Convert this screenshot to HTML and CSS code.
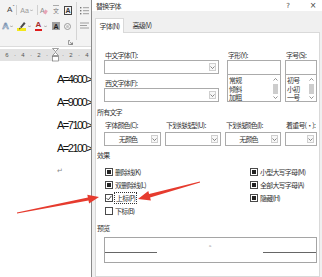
FILE: index.html
```html
<!DOCTYPE html>
<html lang="zh-CN">
<head>
<meta charset="utf-8">
<title>替换字体</title>
<link rel="stylesheet" href="styles.css">
</head>
<body>
<div class="app">
  <div class="word">
    <div class="ribbon">
      <div class="grp">
        <div class="rrow r1">
          <span class="ic shrink">A<span class="caret">ˇ</span></span>
          <span class="vsep s1"></span>
          <span class="ic aa">Aa</span>
          <span class="mini m1"><svg width="3" height="3" viewBox="0 0 3 3"><path d="M0 0.5 L1.5 2 L3 0.5" fill="none" stroke="#999" stroke-width="0.7"/></svg></span>
          <span class="vsep s2"></span>
          <span class="ic clr">A<span class="eraser"></span></span>
          <span class="ic py"><span class="pyt"></span><span class="pyc">文</span></span>
          <span class="ic boxa">A</span>
        </div>
        <div class="rrow r2">
          <span class="ic outa">A</span>
          <span class="mini m2"><svg width="3" height="3" viewBox="0 0 3 3"><path d="M0 0.5 L1.5 2 L3 0.5" fill="none" stroke="#888" stroke-width="0.7"/></svg></span>
          <span class="ic hl"><svg width="9" height="10" viewBox="0 0 9 10"><rect x="0" y="7" width="9" height="3" fill="#f3e81a"/><path d="M3 6 L7 1 L8.6 2.6 L4.4 7.2 Z" fill="#4a4a4a"/><path d="M2.4 6.6 L3.8 7.8 L2.2 8.4 Z" fill="#333"/></svg></span>
          <span class="mini m3"><svg width="3" height="3" viewBox="0 0 3 3"><path d="M0 0.5 L1.5 2 L3 0.5" fill="none" stroke="#888" stroke-width="0.7"/></svg></span>
          <span class="ic reda">A<span class="redbar"></span></span>
          <span class="mini m4"><svg width="3" height="3" viewBox="0 0 3 3"><path d="M0 0.5 L1.5 2 L3 0.5" fill="none" stroke="#888" stroke-width="0.7"/></svg></span>
          <span class="ic shada">A</span>
          <span class="ic circ"><span class="circin"></span></span>
        </div>
        <div class="gfoot">
          <svg width="5" height="5" viewBox="0 0 5 5"><path d="M2 0.5 H0.5 V4.5 H4.5 V3" fill="none" stroke="#777" stroke-width="0.7"/><path d="M1.8 1.8 L4.3 4.3 M4.3 2.2 V4.3 H2.2" fill="none" stroke="#777" stroke-width="0.7"/></svg>
        </div>
      </div>
      <div class="gsep"></div>
      <div class="grp2">
        <div class="rrow r1">
          <svg width="9" height="9" viewBox="0 0 9 9"><g fill="#777"><rect x="0" y="1" width="1.4" height="1.4"/><rect x="0" y="4" width="1.4" height="1.4"/><rect x="0" y="7" width="1.4" height="1.4"/></g><g stroke="#888" stroke-width="0.8"><path d="M3 1.7 H9 M3 4.7 H9 M3 7.7 H9"/></g></svg>
        </div>
        <div class="rrow r2">
          <svg width="9" height="8" viewBox="0 0 9 8"><g stroke="#888" stroke-width="0.8"><path d="M0 1 H9 M0 3.5 H7 M0 6 H9"/></g></svg>
        </div>
      </div>
    </div>
    <div class="ruler">
      <span class="rc">6</span><span class="rc">·</span><span class="rc">4</span><span class="rc">·</span><span class="rc">2</span><span class="rc">·</span><span class="rc"></span><span class="rc">·</span><span class="rc">2</span><span class="rc">·</span><span class="rc">4</span>
      <svg class="marker" width="7" height="14" viewBox="0 0 7 14"><path d="M0.5 0.5 H6.5 L3.5 3.5 Z" fill="#fff" stroke="#777" stroke-width="0.7"/><path d="M3.5 4.5 L6.5 7.5 H0.5 Z" fill="#fff" stroke="#777" stroke-width="0.7"/><rect x="0.5" y="8.5" width="6" height="4.5" fill="#fff" stroke="#777" stroke-width="0.7"/></svg>
    </div>
    <div class="doc">
      <p class="ln">A=4600&gt;</p>
      <p class="ln">A=9000&gt;</p>
      <p class="ln">A=7100&gt;</p>
      <p class="ln">A=2100&gt;</p>
      <p class="ln pm">↵</p>
    </div>
  </div>

  <div class="dialog">
    <div class="titlebar">
      <span class="ttl">替换字体</span>
      <span class="tbb help">?</span>
      <span class="tbb close">×</span>
    </div>
    <div class="tabs">
      <span class="tab on">字体(N)</span>
      <span class="tab">高级(V)</span>
    </div>
    <div class="panel">
      <div class="fontgrid">
        <div class="col1">
          <div class="lbl">中文字体(T):</div>
          <div class="sel"><span class="dd"><svg width="5" height="3" viewBox="0 0 5 3"><path d="M0.5 0.5 L2.5 2.5 L4.5 0.5" fill="none" stroke="#555" stroke-width="0.7"/></svg></span></div>
          <div class="lbl mt5">西文字体(F):</div>
          <div class="sel"><span class="dd"><svg width="5" height="3" viewBox="0 0 5 3"><path d="M0.5 0.5 L2.5 2.5 L4.5 0.5" fill="none" stroke="#555" stroke-width="0.7"/></svg></span></div>
        </div>
        <div class="col2">
          <div class="lbl">字形(Y):</div>
          <div class="inp"></div>
          <div class="list">
            <div class="items"><div class="li">常规</div><div class="li">倾斜</div><div class="li">加粗</div></div>
            <div class="sb">
              <svg width="5" height="3" viewBox="0 0 5 3"><path d="M0.5 2.5 L2.5 0.5 L4.5 2.5" fill="none" stroke="#666" stroke-width="0.7"/></svg>
              <span class="thumb"></span>
              <svg width="5" height="3" viewBox="0 0 5 3"><path d="M0.5 0.5 L2.5 2.5 L4.5 0.5" fill="none" stroke="#666" stroke-width="0.7"/></svg>
            </div>
          </div>
        </div>
        <div class="col3">
          <div class="lbl">字号(S):</div>
          <div class="inp"></div>
          <div class="list">
            <div class="items"><div class="li">初号</div><div class="li">小初</div><div class="li">一号</div></div>
            <div class="sb">
              <svg width="5" height="3" viewBox="0 0 5 3"><path d="M0.5 2.5 L2.5 0.5 L4.5 2.5" fill="none" stroke="#666" stroke-width="0.7"/></svg>
              <span class="thumb"></span>
              <svg width="5" height="3" viewBox="0 0 5 3"><path d="M0.5 0.5 L2.5 2.5 L4.5 0.5" fill="none" stroke="#666" stroke-width="0.7"/></svg>
            </div>
          </div>
        </div>
      </div>

      <div class="hd hd-all">所有文字</div>
      <div class="grid4">
        <div class="lbl">字体颜色(C):</div>
        <div class="lbl">下划线线型(U):</div>
        <div class="lbl">下划线颜色(I):</div>
        <div class="lbl">着重号(·):</div>
        <div class="sel"><span class="val">无颜色</span><span class="dd"><svg width="5" height="3" viewBox="0 0 5 3"><path d="M0.5 0.5 L2.5 2.5 L4.5 0.5" fill="none" stroke="#555" stroke-width="0.7"/></svg></span></div>
        <div class="sel"><span class="val"></span><span class="dd"><svg width="5" height="3" viewBox="0 0 5 3"><path d="M0.5 0.5 L2.5 2.5 L4.5 0.5" fill="none" stroke="#555" stroke-width="0.7"/></svg></span></div>
        <div class="sel"><span class="val">无颜色</span><span class="dd"><svg width="5" height="3" viewBox="0 0 5 3"><path d="M0.5 0.5 L2.5 2.5 L4.5 0.5" fill="none" stroke="#555" stroke-width="0.7"/></svg></span></div>
        <div class="sel"><span class="val"></span><span class="dd"><svg width="5" height="3" viewBox="0 0 5 3"><path d="M0.5 0.5 L2.5 2.5 L4.5 0.5" fill="none" stroke="#555" stroke-width="0.7"/></svg></span></div>
      </div>

      <div class="hd hd-fx">效果</div>
      <div class="fx">
        <div class="cb"><span class="box ind"></span>删除线(K)</div>
        <div class="cb"><span class="box ind"></span>双删除线(L)</div>
        <div class="cb"><span class="box"><svg width="6" height="6" viewBox="0 0 6 6"><path d="M0.6 3.2 L2.3 4.9 L5.4 0.9" fill="none" stroke="#333" stroke-width="0.9"/></svg></span><span class="focus">上标(P)</span></div>
        <div class="cb"><span class="box"></span>下标(B)</div>
        <div class="cb"><span class="box ind"></span>小型大写字母(M)</div>
        <div class="cb"><span class="box ind"></span>全部大写字母(A)</div>
        <div class="cb"><span class="box ind"></span>隐藏(H)</div>
      </div>

      <div class="hd hd-pv">预览</div>
      <div class="preview">
        <span class="pline pl"></span>
        <span class="pmid"><span class="pmark">a</span></span>
        <span class="pline pr"></span>
      </div>
    </div>
  </div>

  <svg class="arrows" width="322" height="277" viewBox="0 0 322 277">
    <polygon points="16.9,212.6 87.9,197.6 87.3,194.7 99,197 89.1,203.5 88.5,200.6 17.1,213.4" fill="#e63b2e"/>
    <polygon points="199.9,181.5 149.1,194.1 148.3,191.0 138,199 150.9,200.6 150.1,197.5 200.1,182.5" fill="#e63b2e"/>
  </svg>
</div>
</body>
</html>
```

FILE: styles.css
```css
* { box-sizing: border-box; }
html, body { margin: 0; padding: 0; }
body {
  width: 322px;
  height: 277px;
  overflow: hidden;
  background: #fff;
  font-family: "Noto Sans CJK SC", "Noto Sans", sans-serif;
  color: #333;
}
.app { position: relative; display: flex; width: 322px; height: 277px; }

/* ---------- Word side ---------- */
.word {
  width: 91px;
  flex: none;
  overflow: hidden;
  display: flex;
  flex-direction: column;
  background: #fff;
}
.ribbon {
  height: 47px;
  flex: none;
  background: #f3f3f3;
  border-bottom: 1px solid #dcdcdc;
  display: flex;
}
.grp { width: 76px; flex: none; display: flex; flex-direction: column; }
.gsep { width: 1px; flex: none; background: #d4d4d4; margin: 2px 0 6px; }
.grp2 { display: flex; flex-direction: column; padding-left: 3px; }
.rrow { display: flex; align-items: center; height: 10px; }
.r1 { margin-top: 5px; }
.r2 { margin-top: 6px; }
.gfoot { margin-top: 8px; height: 8px; display: flex; justify-content: flex-end; padding-right: 3px; align-items: center; }

.ic {
  display: inline-flex;
  align-items: center;
  justify-content: center;
  font-family: "Liberation Sans", sans-serif;
  font-size: 8px;
  line-height: 1;
  height: 10px;
  flex: none;
  position: relative;
}
.vsep { width: 1px; height: 10px; background: #d0d0d0; flex: none; }
.mini { display: inline-flex; width: 3px; justify-content: center; flex: none; }

.shrink { margin-left: 7px; width: 7px; color: #444; justify-content: flex-start; }
.caret { font-size: 5px; align-self: flex-start; margin-left: 0.5px; color: #555; }
.s1 { margin-left: 2px; }
.aa { margin-left: 3px; width: 9px; color: #9a9a9a; font-size: 7px; }
.m1 { margin-left: 1px; }
.s2 { margin-left: 4px; }
.clr { margin-left: 2px; width: 7px; color: #8c8c8c; font-size: 7px; justify-content: flex-start; }
.eraser { position: absolute; right: 0; bottom: 1px; width: 3px; height: 4px; background: #e7a3b6; transform: rotate(30deg); }
.py { margin-left: 5px; width: 8px; flex-direction: column; justify-content: flex-start; }
.pyt { width: 6px; height: 1px; background: #aaa; margin-bottom: 1px; flex: none; }
.pyc { font-family: "Noto Sans CJK SC", sans-serif; font-size: 6px; line-height: 7px; height: 7px; color: #777; overflow: hidden; }
.boxa { margin-left: 4px; width: 8px; height: 9px; border: 1px solid #444; color: #333; font-size: 7px; font-weight: bold; }

.outa { margin-left: 2px; width: 7px; font-size: 9px; font-weight: bold; color: #e4ecf6; -webkit-text-stroke: 0.6px #6b86a8; }
.m2 { margin-left: 1px; }
.hl { margin-left: 4px; width: 9px; }
.m3 { margin-left: 2px; }
.reda { margin-left: 4px; width: 7px; color: #a52a2a; font-size: 8px; flex-direction: column; font-weight: bold; }
.redbar { width: 7px; height: 2px; background: #e01b1b; margin-top: 0; }
.m4 { margin-left: 2px; }
.shada { margin-left: 5px; width: 8px; height: 8px; background: #a0a0a0; color: #1e1e1e; font-size: 7px; font-weight: bold; }
.circ { margin-left: 4px; width: 7px; height: 7px; border: 1px solid #9a9a9a; border-radius: 50%; }
.circin { width: 3px; height: 3px; background: #c4c4c4; border-radius: 50%; }

.ruler {
  height: 12px;
  margin-top: 2px;
  flex: none;
  background: #e2e2e2;
  position: relative;
  display: flex;
  align-items: center;
  padding-left: 3px;
  font-family: "Liberation Sans", sans-serif;
  font-size: 6px;
  color: #555;
}
.rc { width: 8px; flex: none; text-align: center; line-height: 12px; }
.marker { position: absolute; left: 52px; top: -1px; }

.doc { padding: 7px 0 0 57px; }
.ln {
  margin: 0;
  line-height: 23px;
  height: 23px;
  font-family: "Liberation Sans", Arial, sans-serif;
  font-size: 11px;
  letter-spacing: -1.5px;
  white-space: nowrap;
  color: #111;
}
.pm { font-family: "DejaVu Sans", sans-serif; font-size: 7px; color: #888; letter-spacing: 0; }

/* ---------- Dialog ---------- */
.dialog {
  flex: 1;
  background: #f0f0f0;
  border-left: 1px solid #8a8a8a;
  display: flex;
  flex-direction: column;
  font-size: 7px;
  letter-spacing: -0.8px;
}
.titlebar {
  height: 11px;
  flex: none;
  background: #fff;
  display: flex;
  align-items: center;
  padding-left: 4px;
}
.ttl { color: #333; }
.tbb { width: 10px; text-align: center; font-family: "DejaVu Sans", sans-serif; font-size: 7px; letter-spacing: 0; color: #444; }
.help { margin-left: auto; }
.close { margin-left: 15px; margin-right: 4px; font-size: 8px; }

.tabs {
  height: 21px;
  flex: none;
  display: flex;
  align-items: flex-end;
  padding-left: 3px;
  position: relative;
  z-index: 1;
}
.tab {
  height: 14px;
  width: 28px;
  margin-left: 4px;
  display: flex;
  align-items: center;
  justify-content: center;
  color: #333;
}
.tab.on {
  margin-left: 0;
  width: 29px;
  height: 15px;
  margin-bottom: -1px;
  background: #fff;
  border: 1px solid #d9d9d9;
  border-bottom: none;
}

.panel {
  flex: 1;
  margin: 0 2px 0 3px;
  background: #fff;
  border: 1px solid #d9d9d9;
  padding-left: 1px;
}

.lbl {
  height: 8px;
  line-height: 8px;
  padding-left: 1px;
  white-space: nowrap;
  color: #333;
}
.fontgrid { display: flex; margin-top: 18px; margin-left: 7px; }
.col1 { width: 115px; flex: none; }
.col2 { width: 54px; flex: none; margin-left: 8px; }
.col3 { width: 32px; flex: none; margin-left: 4px; }
.fontgrid .lbl { margin-bottom: 1px; }
.fontgrid .mt5 { margin-top: 5px; }

.sel {
  height: 14px;
  border: 1px solid #ababab;
  background: #fff;
  display: flex;
  align-items: center;
  justify-content: flex-end;
}
.val { flex: 1; text-align: center; color: #333; }
.dd {
  width: 7px;
  height: 8px;
  margin-right: 2px;
  border: 1px solid #cfcfcf;
  background: #f7f7f7;
  display: flex;
  align-items: center;
  justify-content: center;
  flex: none;
}
.inp { height: 15px; border: 1px solid #ababab; background: #fff; }
.list {
  height: 27px;
  border: 1px solid #ababab;
  border-top: none;
  display: flex;
  background: #fff;
}
.items { padding-top: 1px; }
.li { height: 8.5px; line-height: 8.5px; padding-left: 1px; white-space: nowrap; }
.sb {
  width: 7px;
  margin-left: auto;
  margin-right: 1px;
  padding: 3px 0 2px;
  display: flex;
  flex-direction: column;
  align-items: center;
  justify-content: space-between;
}
.thumb { width: 5px; height: 10px; background: #cdcdcd; }

.hd { height: 8px; line-height: 8px; color: #333; white-space: nowrap; }
.hd-all { margin-top: 6px; }
.grid4 {
  display: grid;
  grid-template-columns: 57px 56px 56px 32px;
  grid-template-rows: 8px 14px;
  column-gap: 4px;
  row-gap: 3px;
  margin: 5px 0 0 7px;
}

.hd-fx { margin-top: 5px; }
.fx {
  display: grid;
  grid-template-columns: 145px 1fr;
  grid-template-rows: repeat(4, 13px);
  grid-auto-flow: column;
  margin: 6px 0 0 8px;
}
.cb { display: flex; align-items: center; white-space: nowrap; color: #333; }
.box {
  width: 8px;
  height: 8px;
  border: 1px solid #4a4a4a;
  background: #fff;
  margin-right: 2px;
  display: flex;
  align-items: center;
  justify-content: center;
  flex: none;
}
.box.ind::after { content: ""; width: 4px; height: 4px; background: #222; }
.focus { outline: 1px dotted #333; outline-offset: 0; padding: 0 1px; }

.hd-pv { margin-top: 7px; }
.preview {
  margin: 5px 0 0 7px;
  width: 213px;
  height: 26px;
  border: 1px solid #a5a5a5;
  display: flex;
  align-items: flex-start;
}
.pline { height: 15px; border-bottom: 1px solid #666; flex: none; }
.pl { width: 52px; }
.pr { width: 53px; }
.pmid { flex: 1; text-align: center; padding-top: 4px; line-height: 5px; }
.pmark { font-family: "Liberation Sans", sans-serif; font-size: 4px; color: #999; letter-spacing: 0; }

.arrows { position: absolute; left: 0; top: 0; pointer-events: none; }
```
